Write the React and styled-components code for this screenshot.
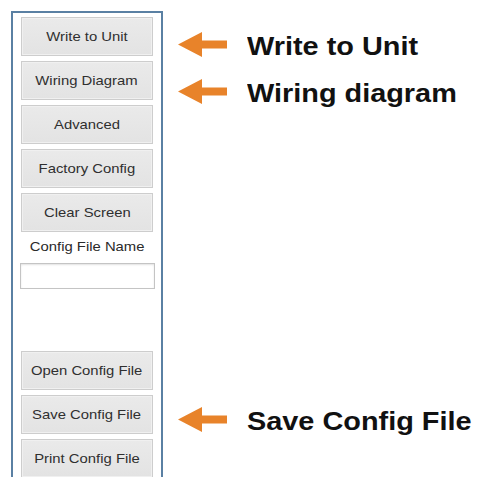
import React from 'react';
import styled, { createGlobalStyle } from 'styled-components';

const GlobalStyle = createGlobalStyle`
  html, body {
    margin: 0;
    padding: 0;
    background: #ffffff;
  }
  body {
    font-family: "Liberation Sans", Arial, sans-serif;
  }
`;

const Page = styled.div`
  display: flex;
  width: 477px;
  height: 477px;
  overflow: hidden;
  background: #ffffff;
`;

const Panel = styled.div`
  margin: 11px 0 0 11px;
  width: 132px;
  height: 470px;
  padding: 4px 8px 0 8px;
  border: 2px solid #5a80a3;
  border-bottom: none;
  display: flex;
  flex-direction: column;
  gap: 5px;
  flex-shrink: 0;
`;

const Button = styled.button`
  width: 132px;
  height: 39px;
  flex-shrink: 0;
  margin: 0;
  padding: 0;
  background: linear-gradient(#eaeaea, #e3e3e3);
  border: 1px solid #cdcdcd;
  box-shadow: inset 0 0 0 1px #f0f0f0;
  color: #2f2f2f;
  font-family: "Liberation Sans", Arial, sans-serif;
  font-size: 13.5px;
  cursor: pointer;
`;

const Stretch = styled.span`
  display: inline-block;
  transform: scaleX(1.1);
  transform-origin: center;
`;

const Label = styled.div`
  margin-top: 2px;
  text-align: center;
  color: #2a2a2a;
  font-size: 13.5px;
  line-height: 16px;
  white-space: nowrap;
`;

const Field = styled.input`
  box-sizing: border-box;
  width: 135px;
  height: 26px;
  margin: 3px 0 0 -1px;
  border: 1px solid #c4c4c4;
  box-shadow: inset 0 1px 2px #e2e2e2;
  background: #fff;
  flex-shrink: 0;
`;

const Spacer = styled.div`
  height: 52px;
  flex-shrink: 0;
`;

const Notes = styled.div`
  display: flex;
  flex-direction: column;
  margin-left: 15px;
  padding-top: 32px;
`;

const Note = styled.div`
  display: flex;
  align-items: center;
  height: 25px;
  margin-top: ${p => p.$top}px;
`;

const NoteText = styled.span`
  display: inline-block;
  margin-left: 20px;
  font-family: "Liberation Sans", Arial, sans-serif;
  font-weight: 700;
  font-size: 26px;
  color: #111;
  white-space: nowrap;
  transform: scaleX(1.11);
  transform-origin: left center;
  position: relative;
  top: 2px;
`;

const Arrow = () => (
  <svg width="49" height="25" viewBox="0 0 49 25">
    <path d="M0 12.5 L24 0 L24 8.5 L49 8.5 L49 16.5 L24 16.5 L24 25 Z" fill="#e8832a" />
  </svg>
);

const App = () => {
  return (
    <Page>
      <GlobalStyle />
      <Panel>
        <Button><Stretch>Write to Unit</Stretch></Button>
        <Button><Stretch>Wiring Diagram</Stretch></Button>
        <Button><Stretch>Advanced</Stretch></Button>
        <Button><Stretch>Factory Config</Stretch></Button>
        <Button><Stretch>Clear Screen</Stretch></Button>
        <Label><Stretch>Config File Name</Stretch></Label>
        <Field type="text" />
        <Spacer />
        <Button><Stretch>Open Config File</Stretch></Button>
        <Button><Stretch>Save Config File</Stretch></Button>
        <Button><Stretch>Print Config File</Stretch></Button>
      </Panel>
      <Notes>
        <Note $top={0}><Arrow /><NoteText>Write to Unit</NoteText></Note>
        <Note $top={22}><Arrow /><NoteText>Wiring diagram</NoteText></Note>
        <Note $top={303}><Arrow /><NoteText>Save Config File</NoteText></Note>
      </Notes>
    </Page>
  );
};

export default App;
